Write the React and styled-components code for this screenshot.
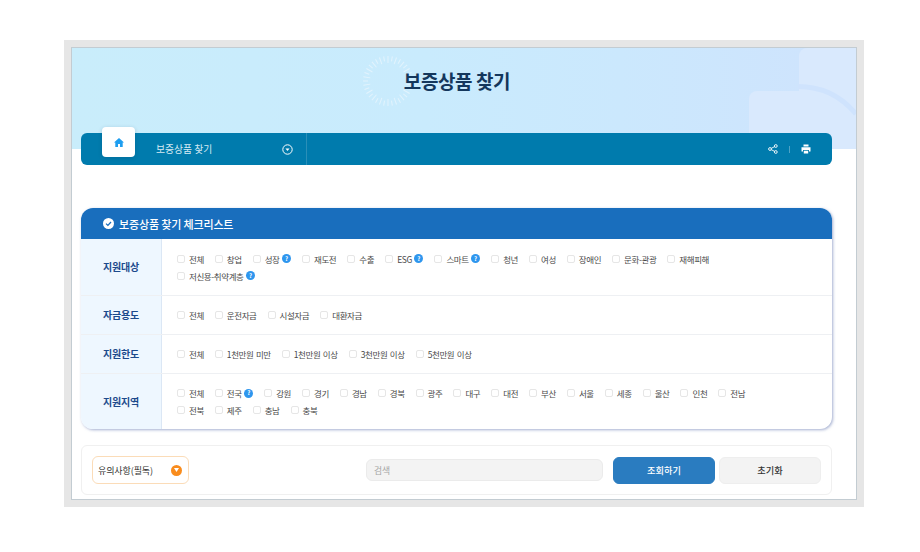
import React from 'react';
import styled, { createGlobalStyle } from 'styled-components';

const Global = createGlobalStyle`
    html, body {
        margin: 0;
        padding: 0;
        background: #fff;
        font-family: "Noto Sans CJK KR", "Noto Sans", sans-serif;
    }
    * { box-sizing: border-box; }
`

const Frame = styled.div`
    width: 800px;
    height: 467px;
    margin: 40px 0 0 64px;
    padding: 7px;
    background: #e6e6e6;
`

const Page = styled.div`
    height: 453px;
    background: #fff;
    border: 1px solid #c3ccd2;
    overflow: hidden;
`

const Hero = styled.div`
    position: relative;
    height: 101px;
    background: linear-gradient(90deg, #c9edfb 0%, #c9ebfd 45%, #cbe8fd 70%, #cfe3fd 100%);
    overflow: hidden;
`

const HeroTitle = styled.h1`
    position: relative;
    margin: 0;
    padding: 19px 14px 0 0;
    text-align: center;
    font-size: 19px;
    line-height: 28px;
    font-weight: 700;
    letter-spacing: -0.4px;
    color: #14375c;
`

const Sunburst = styled.svg`
    position: absolute;
    left: 290px;
    top: 7px;
`

const Deco = styled.div`
    position: absolute;
    background: #d9e9fd;
    border-radius: 8px 0 0 0;
    left: ${p => p.$left}px;
    top: ${p => p.$top}px;
    right: 0;
    bottom: ${p => p.$bottom}px;
`

const DecoArc = styled.svg`
    position: absolute;
    right: 0;
    top: 36px;
`

const NavBar = styled.div`
    position: relative;
    display: flex;
    align-items: center;
    height: 32px;
    margin: -16px 24px 0 9px;
    background: #007bad;
    border-radius: 6px;
`

const HomeTile = styled.div`
    position: absolute;
    left: 21px;
    top: -6px;
    width: 33px;
    height: 30px;
    display: flex;
    align-items: center;
    justify-content: center;
    background: #fff;
    border-radius: 4px;
    box-shadow: 0 1px 4px rgba(0, 60, 90, 0.2);
`

const Crumb = styled.div`
    display: flex;
    align-items: center;
    justify-content: space-between;
    width: 226px;
    height: 100%;
    padding: 0 13px 0 75px;
    border-right: 1px solid #2a8fb8;
    font-size: 9.8px;
    color: #d6eaf3;
`

const NavTools = styled.div`
    display: flex;
    align-items: center;
    margin-left: auto;
    padding-right: 21px;
    color: #fff;
`

const ToolDivider = styled.span`
    width: 1px;
    height: 7px;
    margin: 0 11px 0 11px;
    background: #4ea3c6;
`

const Card = styled.section`
    margin: 43px 24px 0 9px;
    border-radius: 12px;
    background: #fff;
    box-shadow: 1px 1px 3px rgba(90, 110, 170, 0.55);
    overflow: hidden;
`

const CardHead = styled.div`
    display: flex;
    align-items: center;
    gap: 5px;
    height: 31px;
    padding-left: 22px;
    background: #196ebd;
    color: #fff;
    font-size: 11px;
    font-weight: 500;
    letter-spacing: -0.15px;
`

const Row = styled.div`
    display: flex;
    height: ${p => p.$h}px;
    border-bottom: ${p => (p.$last ? 'none' : '1px solid #eef0f3')};
`

const RowLabel = styled.div`
    display: flex;
    align-items: center;
    justify-content: center;
    width: 81px;
    padding-bottom: 1px;
    flex-shrink: 0;
    background: #eef7ff;
    border-right: 1px solid #dbe7f5;
    font-size: 10px;
    font-weight: 700;
    letter-spacing: -0.2px;
    color: #1c4a8c;
`

const Options = styled.div`
    display: flex;
    flex-wrap: wrap;
    align-content: center;
    column-gap: 11px;
    padding: 0 60px 0 15px;
    flex: 1;
`

const Option = styled.label`
    display: flex;
    align-items: center;
    height: 17px;
    font-size: 8.5px;
    letter-spacing: -0.4px;
    word-spacing: 1px;
    color: #4a4a4a;
    white-space: nowrap;
`

const Check = styled.span`
    width: 8px;
    height: 8px;
    margin-right: 4px;
    border: 1px solid #e6e6e6;
    border-radius: 2px;
    background: #fff;
`

const Help = styled.span`
    display: inline-flex;
    align-items: center;
    justify-content: center;
    width: 9px;
    height: 9px;
    margin-left: 2.5px;
    border-radius: 50%;
    background: #2e96ee;
    color: #fff;
    font-size: 6px;
    font-weight: 700;
    line-height: 1;
    letter-spacing: 0;
`

const Footer = styled.div`
    display: flex;
    align-items: center;
    height: 50px;
    margin: 16px 24px 0 9px;
    padding: 0 10px;
    border: 1px solid #f0f0f0;
    border-radius: 6px;
`

const Notice = styled.div`
    display: flex;
    align-items: center;
    justify-content: space-between;
    width: 97px;
    height: 28px;
    padding: 0 6px 0 5px;
    background: #fff;
    border: 1px solid #fbdcb8;
    border-radius: 6px;
    font-size: 9px;
    letter-spacing: -0.1px;
    color: #333;
`

const NoticeIcon = styled.span`
    display: flex;
    align-items: center;
    justify-content: center;
    width: 11px;
    height: 11px;
    border-radius: 50%;
    background: #f98c1d;
`

const Search = styled.div`
    display: flex;
    align-items: center;
    width: 237px;
    height: 22px;
    margin-left: 177px;
    padding-left: 7px;
    background: #f3f3f3;
    border: 1px solid #ebebeb;
    border-radius: 6px;
    font-size: 8.8px;
    color: #a5a5a5;
`

const Button = styled.button`
    width: 102px;
    height: 27px;
    margin-left: ${p => p.$ml}px;
    border: 1px solid ${p => (p.$primary ? '#2a7cc0' : '#eeeeee')};
    border-radius: 6px;
    background: ${p => (p.$primary ? '#2a7cc0' : '#f3f3f3')};
    color: ${p => (p.$primary ? '#fff' : '#333')};
    font-family: inherit;
    font-size: 9.2px;
    font-weight: 500;
    padding: 0;
`

const rows = [
    {
        label: '지원대상', h: 57,
        items: ['전체', '창업', '성장?', '재도전', '수출', 'ESG?', '스마트?', '청년', '여성', '장애인', '문화-관광', '재해피해', '저신용-취약계층?'],
    },
    { label: '자금용도', h: 39, items: ['전체', '운전자금', '시설자금', '대환자금'] },
    { label: '지원한도', h: 39, items: ['전체', '1천만원 미만', '1천만원 이상', '3천만원 이상', '5천만원 이상'] },
    {
        label: '지원지역', h: 55,
        items: ['전체', '전국?', '강원', '경기', '경남', '경북', '광주', '대구', '대전', '부산', '서울', '세종', '울산', '인천', '전남', '전북', '제주', '충남', '충북'],
    },
]

const ticks = Array.from({ length: 36 }, (_, i) => i * 10)

const App = () =>
    <>
        <Global />
        <Frame>
            <Page>
                <Hero>
                    <Sunburst width="52" height="52" viewBox="0 0 52 52">
                        {ticks.map(a =>
                            <line key={a} x1="26" y1="1" x2="26" y2={a % 20 ? 6 : 8} stroke="#e2f3fd" strokeWidth="1" transform={`rotate(${a} 26 26)`} />
                        )}
                    </Sunburst>
                    <Deco $left={727} $top={0} $bottom={50} />
                    <Deco $left={677} $top={43} $bottom={0} />
                    <DecoArc width="110" height="40" viewBox="0 0 110 40">
                        <path d="M52 2.5 C 76 2.5 95 12 110 30" fill="none" stroke="#cfe3fd" strokeWidth="5" />
                    </DecoArc>
                    <HeroTitle>보증상품 찾기</HeroTitle>
                </Hero>
                <NavBar>
                    <HomeTile>
                        <svg width="10" height="9" viewBox="0 0 10 9">
                            <path d="M5 0 L10 4.4 L8.7 4.4 L8.7 9 L6 9 L6 6 L4 6 L4 9 L1.3 9 L1.3 4.4 L0 4.4 Z" fill="#1e9ef0" />
                        </svg>
                    </HomeTile>
                    <Crumb>
                        보증상품 찾기
                        <svg width="11" height="11" viewBox="0 0 11 11">
                            <circle cx="5.5" cy="5.5" r="4.7" fill="none" stroke="#fff" strokeWidth="1" />
                            <path d="M3.5 4.6 H7.5 L5.5 7 Z" fill="#fff" />
                        </svg>
                    </Crumb>
                    <NavTools>
                        <svg width="10" height="10" viewBox="0 0 10 10">
                            <path d="M2 5 L7.8 2 M2 5 L7.8 8" stroke="#fff" strokeWidth="0.9" />
                            <circle cx="2" cy="5" r="1.4" fill="#007bad" stroke="#fff" strokeWidth="0.9" />
                            <circle cx="7.8" cy="2" r="1.4" fill="#007bad" stroke="#fff" strokeWidth="0.9" />
                            <circle cx="7.8" cy="8" r="1.4" fill="#007bad" stroke="#fff" strokeWidth="0.9" />
                        </svg>
                        <ToolDivider />
                        <svg width="10" height="10" viewBox="0 0 10 10">
                            <path d="M2.5 0.5 H7.5 V2.6 H2.5 Z M0.5 3.2 H9.5 V7.4 H8 V6 H2 V7.4 H0.5 Z M2.8 6.8 H7.2 V9.5 H2.8 Z" fill="#fff" />
                        </svg>
                    </NavTools>
                </NavBar>
                <Card>
                    <CardHead>
                        <svg width="11" height="11" viewBox="0 0 11 11">
                            <circle cx="5.5" cy="5.5" r="5.5" fill="#fff" />
                            <path d="M3 5.6 L4.9 7.4 L8 4" fill="none" stroke="#196ebd" strokeWidth="1.3" />
                        </svg>
                        보증상품 찾기 체크리스트
                    </CardHead>
                    {rows.map((row, i) =>
                        <Row key={row.label} $h={row.h} $last={i === rows.length - 1}>
                            <RowLabel>{row.label}</RowLabel>
                            <Options>
                                {row.items.map((item, j) =>
                                    <Option key={j}>
                                        <Check />
                                        {item.replace('?', '')}
                                        {item.endsWith('?') && <Help>?</Help>}
                                    </Option>
                                )}
                            </Options>
                        </Row>
                    )}
                </Card>
                <Footer>
                    <Notice>
                        유의사항(필독)
                        <NoticeIcon>
                            <svg width="5" height="4" viewBox="0 0 5 4">
                                <path d="M0 0 H5 L2.5 4 Z" fill="#fff" />
                            </svg>
                        </NoticeIcon>
                    </Notice>
                    <Search>검색</Search>
                    <Button $primary $ml={10}>조회하기</Button>
                    <Button $ml={4}>초기화</Button>
                </Footer>
            </Page>
        </Frame>
    </>

export default App
